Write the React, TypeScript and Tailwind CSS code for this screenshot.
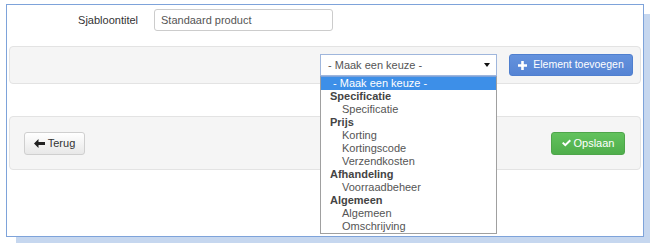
const OPTIONS: { label: string; kind: "sel" | "group" | "item" }[] = [
  { label: "- Maak een keuze -", kind: "sel" },
  { label: "Specificatie", kind: "group" },
  { label: "Specificatie", kind: "item" },
  { label: "Prijs", kind: "group" },
  { label: "Korting", kind: "item" },
  { label: "Kortingscode", kind: "item" },
  { label: "Verzendkosten", kind: "item" },
  { label: "Afhandeling", kind: "group" },
  { label: "Voorraadbeheer", kind: "item" },
  { label: "Algemeen", kind: "group" },
  { label: "Algemeen", kind: "item" },
  { label: "Omschrijving", kind: "item" },
];

const font = "font-['Liberation_Sans',Arial,sans-serif]";

export default function App() {
  return (
    <div className={`h-[250px] w-[666px] overflow-hidden bg-white ${font}`}>
      <div className="relative ml-[6px] mt-[4px] h-[233px] w-[638px] border border-[#7ea3da] bg-white shadow-[8px_8px_0_-2px_#c6d7ef]">
        {/* title row */}
        <div className="flex h-[41px] items-start pt-[4px]">
          <div className="flex h-[22px] items-center">
            <label className="w-[131px] text-right text-[11px] text-[#333]">Sjabloontitel</label>
            <input
              readOnly
              value="Standaard product"
              className="ml-[16px] h-[22px] w-[179px] rounded-[3px] border border-[#cccccc] bg-white px-[6px] text-[11px] text-[#555] outline-none"
            />
          </div>
        </div>

        {/* add element well */}
        <div className="mx-[2px] flex h-[38px] items-center justify-end gap-[12px] rounded-[4px] border border-[#e3e3e3] bg-[#f5f5f5] pr-[7px]">
          <div className="flex h-[22px] w-[177px] items-center justify-between border border-[#9fb6dc] bg-white pl-[7px] pr-[6px] text-[11px] text-[#555]">
            <span>- Maak een keuze -</span>
            <svg width="6" height="4" viewBox="0 0 6 4">
              <path d="M0 0h6L3 4z" fill="#111" />
            </svg>
          </div>
          <button className="flex h-[22px] w-[124px] items-center justify-center gap-[6px] rounded-[3px] border border-[#4f7fcf] bg-gradient-to-b from-[#6492dd] to-[#5584d4] text-[10.5px] text-white">
            <svg width="9" height="9" viewBox="0 0 9 9">
              <path d="M3.2 0h2.6v3.2H9v2.6H5.8V9H3.2V5.8H0V3.2h3.2z" fill="#fff" />
            </svg>
            Element toevoegen
          </button>
        </div>

        {/* footer well */}
        <div className="mx-[2px] mt-[32px] flex h-[54px] items-center justify-between rounded-[4px] border border-[#e3e3e3] bg-[#f5f5f5] pl-[14px] pr-[15px]">
          <button className="flex h-[23px] w-[61px] items-center justify-center gap-[3px] rounded-[3px] border border-[#cfcfcf] bg-gradient-to-b from-white to-[#e8e8e8] text-[11px] text-[#333]">
            <svg width="11" height="9" viewBox="0 0 11 9">
              <path d="M0 4.5L4.5 0v3H11v3H4.5v3z" fill="#222" />
            </svg>
            Terug
          </button>
          <button className="flex h-[23px] w-[74px] items-center justify-center gap-[3px] rounded-[3px] border border-[#4ea54a] bg-gradient-to-b from-[#62c25d] to-[#4fae4b] text-[11px] text-white">
            <svg width="9" height="8" viewBox="0 0 9 8">
              <path d="M0 4.3l1.4-1.4L3.3 4.8 7.6 0.5 9 1.9 3.3 7.6z" fill="#fff" />
            </svg>
            Opslaan
          </button>
        </div>

        {/* open dropdown list */}
        <div className="absolute left-[313px] top-[71px] z-10 w-[177px] border border-[#a0a0a0] border-t-[#7ea3da] bg-white">
          {OPTIONS.map((o, i) => (
            <div
              key={i}
              className={
                o.kind === "sel"
                  ? "h-[13px] bg-[#3d8fe8] pl-[12px] text-[11px] leading-[13px] text-white"
                  : o.kind === "group"
                  ? "h-[13px] pl-[9px] text-[11px] font-bold leading-[13px] text-[#444]"
                  : "h-[13px] pl-[21px] text-[11px] leading-[13px] text-[#555]"
              }
            >
              {o.label}
            </div>
          ))}
        </div>
      </div>
    </div>
  );
}
